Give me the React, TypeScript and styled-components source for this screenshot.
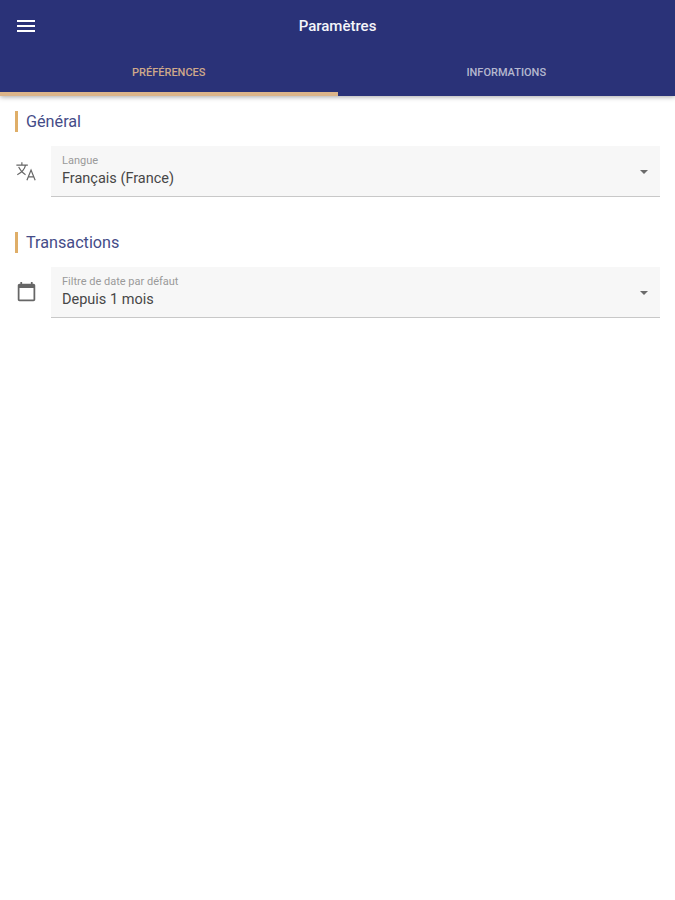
import React from "react";
import styled, { createGlobalStyle } from "styled-components";

const GlobalStyle = createGlobalStyle`
  html, body {
    margin: 0;
    padding: 0;
    background: #ffffff;
    font-family: Roboto, "Liberation Sans", sans-serif;
  }
`;

const Page = styled.div`
  width: 675px;
  height: 900px;
  overflow: hidden;
  background: #fff;
`;

const Header = styled.header`
  background: #2a3278;
  height: 96px;
  box-shadow: 0 1px 5px rgba(0, 0, 0, 0.35);
  display: flex;
  flex-direction: column;
  position: relative;
`;

const Toolbar = styled.div`
  height: 52px;
  display: flex;
  align-items: center;
  justify-content: center;
  position: relative;
`;

const MenuButton = styled.div`
  position: absolute;
  left: 14px;
  top: 14px;
  width: 24px;
  height: 24px;
  color: #fff;
`;

const Title = styled.h1`
  margin: 0;
  font-size: 15px;
  font-weight: 500;
  color: #f4f5fa;
`;

const Tabs = styled.div`
  flex: 1;
  display: flex;
`;

const Tab = styled.div<{ $active?: boolean }>`
  width: 50%;
  display: flex;
  align-items: center;
  justify-content: center;
  font-size: 11px;
  font-weight: 500;
  box-sizing: border-box;
  color: ${(p) => (p.$active ? "#cfa98a" : "rgba(255, 255, 255, 0.66)")};
  border-bottom: 4px solid ${(p) => (p.$active ? "#dcb58a" : "transparent")};
`;

const Content = styled.main`
  padding: 15px 15px 0 15px;
`;

const Section = styled.section`
  margin-bottom: 35px;
`;

const SectionTitle = styled.h2`
  margin: 0 0 14px;
  height: 21px;
  border-left: 3px solid #dfae68;
  padding-left: 8px;
  font-size: 16.2px;
  line-height: 22px;
  font-weight: 400;
  color: #454c88;
`;

const Row = styled.div`
  display: flex;
  align-items: center;
`;

const IconSlot = styled.div<{ $inset?: number }>`
  width: 36px;
  flex: none;
  display: flex;
  justify-content: flex-start;
  padding-left: ${(p) => p.$inset ?? 0}px;
  box-sizing: border-box;
  color: #666666;
  margin-top: -2px;
`;

const Field = styled.div`
  flex: 1;
  height: 51px;
  box-sizing: border-box;
  padding: 9px 11px 0;
  background: #f7f7f7;
  border-bottom: 1px solid #c8c8c8;
  position: relative;
`;

const FieldLabel = styled.div`
  font-size: 11px;
  line-height: 12px;
  color: #9a9a9a;
`;

const FieldValue = styled.div`
  margin-top: 3px;
  font-size: 14.5px;
  line-height: 18px;
  color: #474747;
`;

const Caret = styled.div`
  position: absolute;
  right: 12px;
  top: 24px;
  width: 0;
  height: 0;
  border-left: 4px solid transparent;
  border-right: 4px solid transparent;
  border-top: 4px solid #6b6b6b;
`;

const MenuIcon = () => (
  <svg width="24" height="24" viewBox="0 0 24 24" fill="currentColor">
    <path d="M3 18h18v-2H3v2zm0-5h18v-2H3v2zm0-7v2h18V6H3z" />
  </svg>
);

const TranslateIcon = () => (
  <svg width="22" height="22" viewBox="0 0 24 24" fill="none" stroke="currentColor" strokeWidth="1.3">
    <path d="M1.5 5.5h12.5M7.5 2.5v3M11.5 5.5c-1 4.5-4 8-9 10.5M4 7.5c1.5 3.5 4 6.5 7.5 8.5" />
    <path d="M13 22l4.5-11 4.5 11M14.5 18.5h6" />
  </svg>
);

const CalendarIcon = () => (
  <svg width="21" height="21" viewBox="0 0 24 24" fill="currentColor">
    <path d="M20 3h-1V1h-2v2H7V1H5v2H4c-1.1 0-2 .9-2 2v16c0 1.1.9 2 2 2h16c1.1 0 2-.9 2-2V5c0-1.1-.9-2-2-2zm0 18H4V8h16v13z" />
  </svg>
);

export default function App() {
  return (
    <Page>
      <GlobalStyle />
      <Header>
        <Toolbar>
          <MenuButton>
            <MenuIcon />
          </MenuButton>
          <Title>Paramètres</Title>
        </Toolbar>
        <Tabs>
          <Tab $active>PRÉFÉRENCES</Tab>
          <Tab>INFORMATIONS</Tab>
        </Tabs>
      </Header>
      <Content>
        <Section>
          <SectionTitle>Général</SectionTitle>
          <Row>
            <IconSlot>
              <TranslateIcon />
            </IconSlot>
            <Field>
              <FieldLabel>Langue</FieldLabel>
              <FieldValue>Français (France)</FieldValue>
              <Caret />
            </Field>
          </Row>
        </Section>
        <Section>
          <SectionTitle>Transactions</SectionTitle>
          <Row>
            <IconSlot $inset={1}>
              <CalendarIcon />
            </IconSlot>
            <Field>
              <FieldLabel>Filtre de date par défaut</FieldLabel>
              <FieldValue>Depuis 1 mois</FieldValue>
              <Caret />
            </Field>
          </Row>
        </Section>
      </Content>
    </Page>
  );
}
